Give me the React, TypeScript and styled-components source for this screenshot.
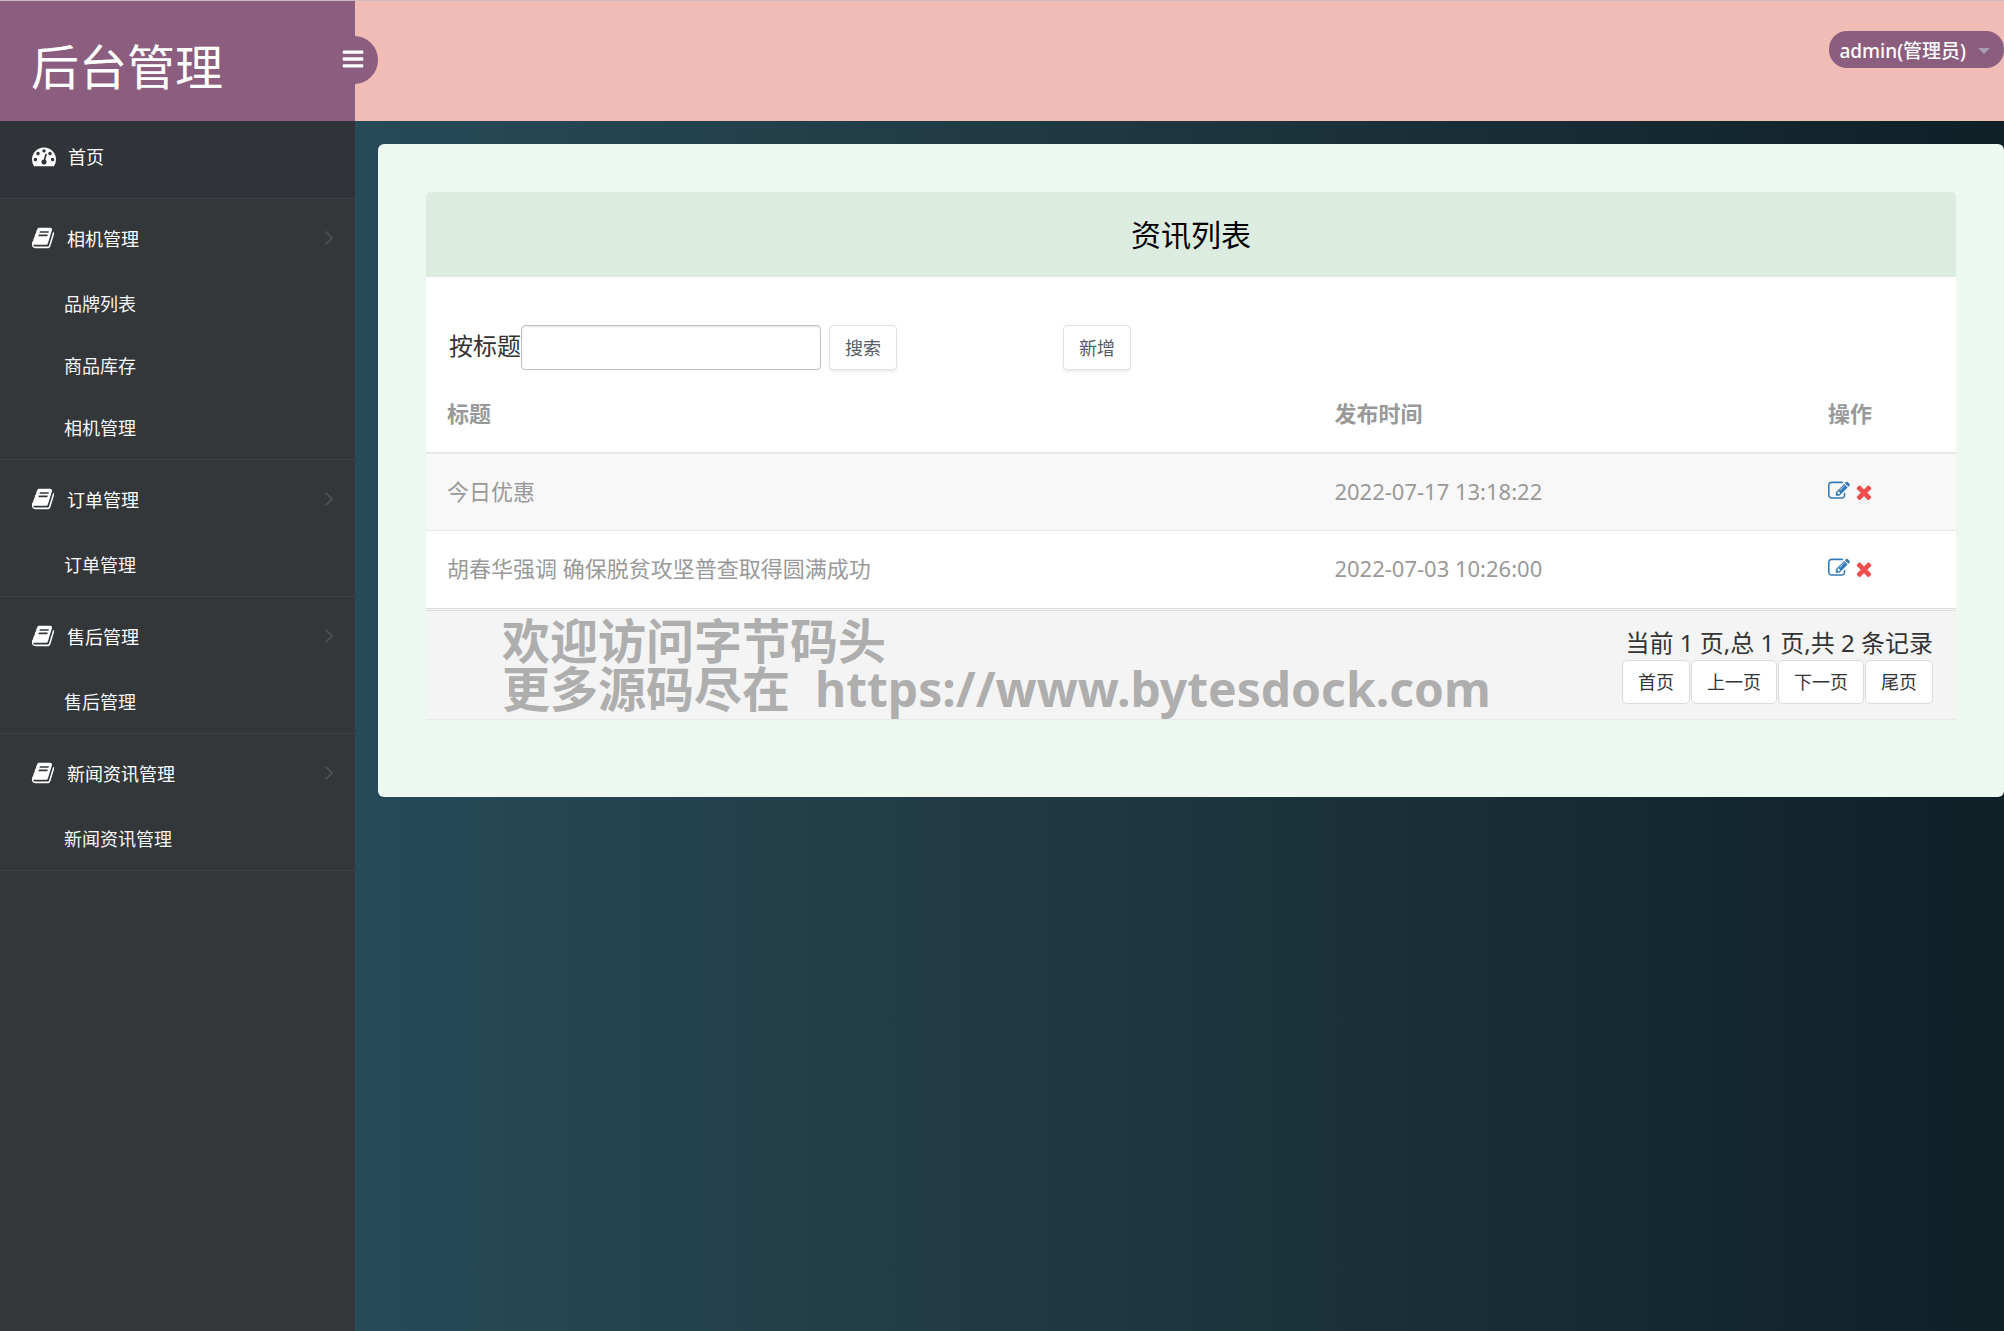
import React from "react";
import styled, { createGlobalStyle } from "styled-components";

const GlobalStyle = createGlobalStyle`
  * { box-sizing: border-box; }
  body {
    margin: 0;
    font-family: "Noto Sans", "Noto Sans CJK SC", sans-serif;
    font-size: 24px;
    color: #333;
    background: #203a43;
  }
  button, input { font-family: inherit; }
  a { text-decoration: none; }
`;

const ICONS = {
  bars: "M1664 1344v128q0 26-19 45t-45 19h-1408q-26 0-45-19t-19-45v-128q0-26 19-45t45-19h1408q26 0 45 19t19 45zm0-512v128q0 26-19 45t-45 19h-1408q-26 0-45-19t-19-45v-128q0-26 19-45t45-19h1408q26 0 45 19t19 45zm0-512v128q0 26-19 45t-45 19h-1408q-26 0-45-19t-19-45v-128q0-26 19-45t45-19h1408q26 0 45 19t19 45z",
  dashboard:
    "M384 1152q0-53-37.5-90.5t-90.5-37.5-90.5 37.5-37.5 90.5 37.5 90.5 90.5 37.5 90.5-37.5 37.5-90.5zm192-448q0-53-37.5-90.5t-90.5-37.5-90.5 37.5-37.5 90.5 37.5 90.5 90.5 37.5 90.5-37.5 37.5-90.5zm428 481l101-382q6-26-7.5-48.5t-38.5-29.5-48 6.5-30 39.5l-101 382q-60 5-107 43.5t-63 98.5q-20 77 20 146t117 89 146-20 89-117q16-60-6-117t-72-91zm660-33q0-53-37.5-90.5t-90.5-37.5-90.5 37.5-37.5 90.5 37.5 90.5 90.5 37.5 90.5-37.5 37.5-90.5zm-640-640q0-53-37.5-90.5t-90.5-37.5-90.5 37.5-37.5 90.5 37.5 90.5 90.5 37.5 90.5-37.5 37.5-90.5zm448 192q0-53-37.5-90.5t-90.5-37.5-90.5 37.5-37.5 90.5 37.5 90.5 90.5 37.5 90.5-37.5 37.5-90.5zm320 448q0 261-141 483-19 29-54 29h-1402q-35 0-54-29-141-221-141-483 0-182 71-348t191-286 286-191 348-71 348 71 286 191 191 286 71 348z",
  book: "M1703 478q40 57 18 129l-275 906q-19 64-76.500 107.500t-122.500 43.500h-923q-77 0-148.500-53.500t-99.500-131.500q-24-67-2-127 0-4 3-27t4-37q1-8-3-21.500t-3-19.500q2-11 8-21t16.500-23.500 16.500-23.500q23-38 45-91.500t30-91.500q3-10 .5-30t-.5-28q3-11 17-28t17-23q21-36 42-92t25-90q1-9-2.500-32t.5-28q4-13 22-30.500t22-22.500q19-26 42.500-84.500t27.500-96.500q1-8-3-25.500t-2-26.500q2-8 9-18t18-23 17-21q8-12 16.500-30.500t15-35 16-36 19.500-32 26.500-23.500 36-11.500 47.500 5.500l-1 3q38-9 51-9h761q74 0 114 56t18 130l-274 906q-36 119-71.500 153.500t-128.500 34.500h-869q-27 0-38 15-11 16-1 43 24 70 144 70h923q29 0 56-15.500t35-41.500l300-987q7-22 5-57 38 15 59 43zm-1064 2q-4 13 2 22.500t20 9.500h608q13 0 25.500-9.500t16.500-22.500l21-64q4-13-2-22.500t-20-9.500h-608q-13 0-25.500 9.500t-16.500 22.500zm-83 256q-4 13 2 22.500t20 9.500h608q13 0 25.500-9.500t16.500-22.500l21-64q4-13-2-22.500t-20-9.500h-608q-13 0-25.500 9.500t-16.500 22.500z",
  edit: "M888 1184l116-116-152-152-116 116v56h96v96h56zm440-720q-16-16-33 1l-350 350q-17 17-1 33t33-1l350-350q17-17 1-33zm80 594v190q0 119-84.500 203.500t-203.500 84.500h-832q-119 0-203.500-84.500t-84.500-203.500v-832q0-119 84.500-203.500t203.500-84.500h832q63 0 117 25 15 7 18 23 3 17-9 29l-49 49q-14 14-32 8-23-6-45-6h-832q-66 0-113 47t-47 113v832q0 66 47 113t113 47h832q66 0 113-47t47-113v-126q0-13 9-22l64-64q15-15 35-7t20 29zm-96-738l288 288-672 672h-288v-288zm444 132l-92 92-288-288 92-92q28-28 68-28t68 28l152 152q28 28 28 68t-28 68z",
  times:
    "M1490 1322q0 40-28 68l-136 136q-28 28-68 28t-68-28l-294-294-294 294q-28 28-68 28t-68-28l-136-136q-28-28-28-68t28-68l294-294-294-294q-28-28-28-68t28-68l136-136q28-28 68-28t68 28l294 294 294-294q28-28 68-28t68 28l136 136q28 28 28 68t-28 68l-294 294 294 294q28 28 28 68z",
};

function Icon({ name, size }: { name: keyof typeof ICONS; size: number }) {
  return (
    <svg width={size} height={size} viewBox="0 0 1792 1792" fill="currentColor" aria-hidden="true">
      <path d={ICONS[name]} />
    </svg>
  );
}

const Page = styled.div`
  display: grid;
  grid-template-columns: 355px minmax(0, 1fr);
  grid-template-rows: auto 1fr;
  min-height: 100vh;
  background: linear-gradient(to left, #0f2027, #203a43, #2c5364);
`;

const Brand = styled.div`
  position: relative;
  display: flex;
  align-items: center;
  height: 121px;
  padding: 12px 31px 0;
  background: #8b5d7e;
  border-top: 1px solid #c8b8c4;
`;

const BrandLink = styled.a`
  color: #fff;
  font-size: 48px;
  line-height: 64px;
`;

const MenuToggle = styled.button`
  position: absolute;
  right: -23px;
  top: 35px;
  z-index: 1;
  display: flex;
  align-items: center;
  justify-content: center;
  width: 48px;
  height: 48px;
  padding: 0 2px 2px 0;
  border: 0;
  border-radius: 50%;
  background: #8b5d7e;
  color: #fff;
`;

const Header = styled.header`
  display: flex;
  justify-content: flex-end;
  align-items: flex-start;
  padding-top: 30px;
  background: #f1bcb5;
  border-top: 1px solid #d0bcba;
`;

const UserMenu = styled.button`
  display: flex;
  align-items: center;
  gap: 12px;
  height: 37px;
  padding: 3px 14px 0 10px;
  border: 0;
  border-radius: 18px;
  background: #8b5d7e;
  color: #fff;
  font-size: 19px;
  font-weight: 500;
  line-height: 28px;
`;

const Caret = styled.span`
  border: 6px solid transparent;
  border-top-color: #a79bb4;
  border-bottom: 0;
`;

const Sidebar = styled.nav`
  background: #33373a;
`;

const Group = styled.div<{ $dark?: boolean }>`
  border-bottom: 1px solid #3e4246;
  background: ${(p) => (p.$dark ? "#303338" : "transparent")};
`;

const GroupLink = styled.a<{ $home?: boolean }>`
  display: flex;
  align-items: center;
  gap: 12px;
  height: ${(p) => (p.$home ? 77 : 74)}px;
  padding: ${(p) => (p.$home ? "0 21px 8px 32px" : "3px 21px 0 31px")};
  color: #fff;
  font-size: 18px;
`;

const GroupLabel = styled.span`
  flex: 1;
`;

const SubList = styled.ul`
  margin: 0;
  padding: 0;
  list-style: none;
`;

const SubLink = styled.a`
  display: flex;
  align-items: center;
  height: 62px;
  padding: 0 0 3px 64px;
  color: #f4f6f8;
  font-size: 18px;
`;

const Main = styled.main`
  padding: 23px 0 23px 23px;
`;

const Panel = styled.section`
  padding: 48px 48px 77px;
  border-radius: 6px;
  background: #ecf8f0;
`;

const Card = styled.div`
  background: #fff;
`;

const Title = styled.h1`
  margin: 0;
  padding: 20px;
  border-radius: 3px 3px 0 0;
  background: #dcece0;
  color: #000;
  font-size: 30px;
  font-weight: 400;
  line-height: 45px;
  text-align: center;
`;

const Toolbar = styled.form`
  display: flex;
  align-items: center;
  padding: 48px 23px 7px;
`;

const SearchLabel = styled.label`
  padding-bottom: 4px;
  line-height: 36px;
`;

const SearchInput = styled.input`
  width: 300px;
  height: 45px;
  margin-right: 8px;
  padding: 8px 12px;
  border: 1px solid #bfc0c2;
  border-radius: 4px;
  background: #fff;
  box-shadow: inset 0 1px 2px rgba(0, 0, 0, 0.1);
  font-size: 18px;
`;

const ToolButton = styled.button`
  height: 45px;
  padding: 0 15px 2px;
  border: 1px solid #dfe1e3;
  border-radius: 4px;
  background: #fff;
  box-shadow: 0 2px 2px rgba(0, 0, 0, 0.07);
  color: #575c65;
  font-size: 18px;
`;

const AddButton = styled(ToolButton)`
  margin-left: 166px;
`;

const Table = styled.table`
  width: 100%;
  border-collapse: separate;
  border-spacing: 0;
  table-layout: fixed;
  color: #999;
  font-size: 22px;
  line-height: 32px;
  text-align: left;
`;

const HeadCell = styled.th<{ $width?: string }>`
  width: ${(p) => p.$width ?? "auto"};
  height: 77px;
  padding: 0 21px 3px;
  border-bottom: 2px solid #e6e7e7;
  font-weight: 700;
`;

const Row = styled.tr`
  &:nth-child(odd) { background: #f8f8f8; }
  &:first-child td { border-bottom: 1px solid #e6e7e7; }
`;

const Cell = styled.td`
  height: 77px;
  padding: 0 21px 3px;
`;

const Actions = styled.div`
  display: flex;
  align-items: center;
`;

const EditLink = styled.a`
  display: flex;
  color: #337ab7;
`;

const DeleteLink = styled.a`
  display: flex;
  padding: 2px 0 0 3px;
  color: #ef4f4f;
`;

const Footer = styled.footer`
  position: relative;
  display: flex;
  flex-direction: column;
  align-items: flex-end;
  padding: 15px 23px;
  border-top: 3px double #dedede;
  border-bottom: 1px solid #e3ebe5;
  background: #f4f4f4;
`;

const Summary = styled.div`
  line-height: 34px;
`;

const Pager = styled.div`
  display: flex;
  gap: 1px;
`;

const PageButton = styled.button`
  height: 44px;
  padding: 0 15px 2px;
  border: 1px solid #d9dadb;
  border-radius: 5px;
  background: #fff;
  color: #333;
  font-size: 18px;
`;

const Watermark = styled.div`
  position: absolute;
  left: 76px;
  top: 6px;
  color: #aeaeae;
  font-size: 48px;
  font-weight: 700;
  line-height: 48px;
  white-space: pre;
  pointer-events: none;
`;

const groups = [
  { label: "相机管理", items: ["品牌列表", "商品库存", "相机管理"] },
  { label: "订单管理", items: ["订单管理"] },
  { label: "售后管理", items: ["售后管理"] },
  { label: "新闻资讯管理", items: ["新闻资讯管理"] },
];

const news = [
  { title: "今日优惠", time: "2022-07-17 13:18:22" },
  { title: "胡春华强调 确保脱贫攻坚普查取得圆满成功", time: "2022-07-03 10:26:00" },
];

function Chevron() {
  return (
    <svg width="10" height="16" viewBox="0 0 10 16" fill="none" stroke="#50555a" strokeWidth="1.5" aria-hidden="true">
      <path d="M1.500 1.500L8 8l-6.500 6.500" />
    </svg>
  );
}

export default function App() {
  return (
    <>
      <GlobalStyle />
      <Page>
        <Brand>
          <BrandLink href="#">后台管理</BrandLink>
          <MenuToggle type="button" aria-label="菜单">
            <Icon name="bars" size={24} />
          </MenuToggle>
        </Brand>
        <Header>
          <UserMenu type="button">
            admin(管理员)
            <Caret />
          </UserMenu>
        </Header>
        <Sidebar>
          <Group $dark>
            <GroupLink href="#" $home>
              <Icon name="dashboard" size={24} />
              <GroupLabel>首页</GroupLabel>
            </GroupLink>
          </Group>
          {groups.map((group) => (
            <Group key={group.label}>
              <GroupLink href="#">
                <Icon name="book" size={24} />
                <GroupLabel>{group.label}</GroupLabel>
                <Chevron />
              </GroupLink>
              <SubList>
                {group.items.map((item) => (
                  <li key={item}>
                    <SubLink href="#">{item}</SubLink>
                  </li>
                ))}
              </SubList>
            </Group>
          ))}
        </Sidebar>
        <Main>
          <Panel>
            <Card>
              <Title>资讯列表</Title>
              <Toolbar onSubmit={(e) => e.preventDefault()}>
                <SearchLabel htmlFor="title">按标题</SearchLabel>
                <SearchInput id="title" type="text" />
                <ToolButton type="submit">搜索</ToolButton>
                <AddButton type="button">新增</AddButton>
              </Toolbar>
              <Table>
                <thead>
                  <tr>
                    <HeadCell $width="58%">标题</HeadCell>
                    <HeadCell>发布时间</HeadCell>
                    <HeadCell $width="149px">操作</HeadCell>
                  </tr>
                </thead>
                <tbody>
                  {news.map((item) => (
                    <Row key={item.title}>
                      <Cell>{item.title}</Cell>
                      <Cell>{item.time}</Cell>
                      <Cell>
                        <Actions>
                          <EditLink href="#" aria-label="编辑">
                            <Icon name="edit" size={22} />
                          </EditLink>
                          <DeleteLink href="#" aria-label="删除">
                            <Icon name="times" size={22} />
                          </DeleteLink>
                        </Actions>
                      </Cell>
                    </Row>
                  ))}
                </tbody>
              </Table>
              <Footer>
                <Watermark>{"欢迎访问字节码头\n更多源码尽在  https://www.bytesdock.com"}</Watermark>
                <Summary>当前 1 页,总 1 页,共 2 条记录</Summary>
                <Pager>
                  <PageButton type="button">首页</PageButton>
                  <PageButton type="button">上一页</PageButton>
                  <PageButton type="button">下一页</PageButton>
                  <PageButton type="button">尾页</PageButton>
                </Pager>
              </Footer>
            </Card>
          </Panel>
        </Main>
      </Page>
    </>
  );
}
